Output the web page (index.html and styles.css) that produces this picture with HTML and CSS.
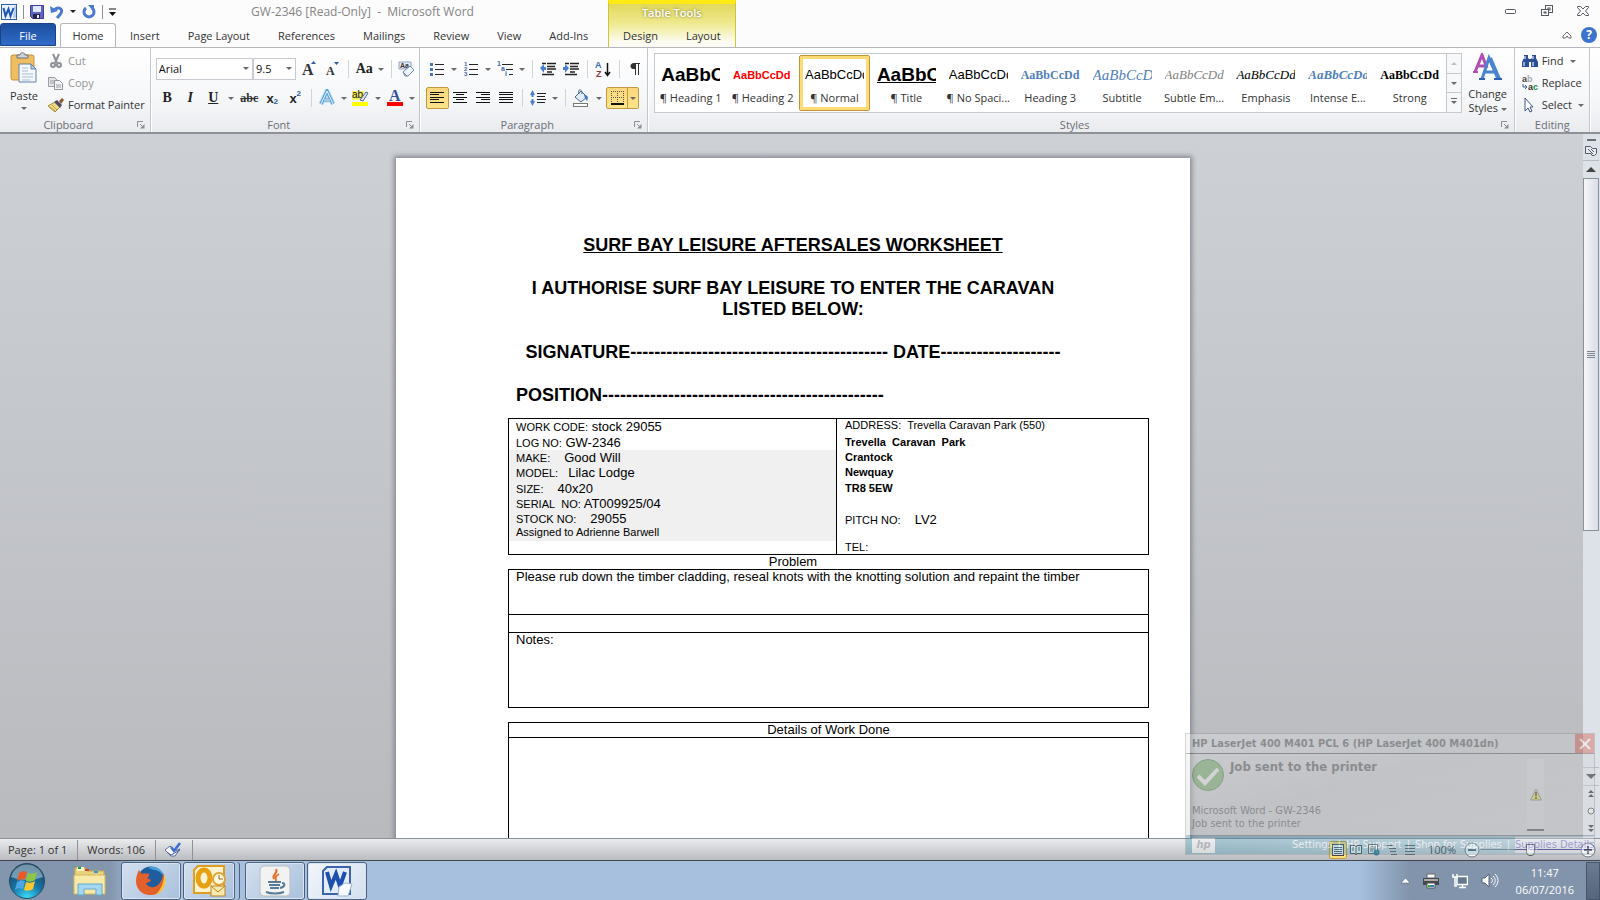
FILE: index.html
```html
<!DOCTYPE html>
<html lang="en">
<head>
<meta charset="utf-8">
<title>GW-2346 [Read-Only] - Microsoft Word</title>
<link rel="stylesheet" href="styles.css">
</head>
<body>
<div class="app">
  <header class="header">
    <div class="header-main">
      <div class="title-row">
        <div class="qat">
          <button class="icon-btn" aria-label="Word menu"><svg width="16" height="16" viewBox="0 0 16 16"><rect x=".5" y=".5" width="15" height="15" fill="#eaf2fc" stroke="#2a5caa"/><path d="M13 2h2v12h-3" fill="#b9cfee"/><path d="M2.500 4l2 8L7.500 5l2 7 3-8" fill="none" stroke="#1d57b8" stroke-width="2"/></svg></button>
          <span class="qat-sep"></span>
          <button class="icon-btn" aria-label="Save"><svg width="14" height="14" viewBox="0 0 14 14"><path d="M.5.500h13v13h-11l-2-2z" fill="#6166c4" stroke="#3f3f96"/><rect x="3" y="1" width="8" height="6" fill="#dfeafa"/><rect x="3" y="9" width="7" height="5" fill="#26264c"/><rect x="7" y="10" width="2" height="3" fill="#eee"/></svg></button>
          <button class="icon-btn" aria-label="Undo"><svg width="14" height="14" viewBox="0 0 14 14"><path d="M4 5c5-4 9-1 7 3-1 2-2 3-4 5" fill="none" stroke="#4a7bd0" stroke-width="3"/><path d="M0 1l1 7 7-2z" fill="#4a7bd0"/></svg></button>
          <span class="caret caret-dark"></span>
          <button class="icon-btn" aria-label="Repeat"><svg width="14" height="14" viewBox="0 0 14 14"><path d="M4 3a5 5 0 1 0 6 0" fill="none" stroke="#4a7bd0" stroke-width="3"/><path d="M6 0h6v7z" fill="#4a7bd0"/></svg></button>
          <span class="qat-sep"></span>
          <button class="icon-btn" aria-label="Customize"><svg width="7" height="8" viewBox="0 0 7 8"><path d="M0 1h7" stroke="#111"/><path d="M0 4h7L3.500 8z" fill="#111"/></svg></button>
        </div>
        <div class="title">GW-2346 [Read-Only]&nbsp; -&nbsp; Microsoft Word</div>
      </div>
      <nav class="tabs">
        <button class="tab tab-file">File</button>
        <button class="tab tab-active">Home</button>
        <button class="tab">Insert</button>
        <button class="tab">Page Layout</button>
        <button class="tab">References</button>
        <button class="tab">Mailings</button>
        <button class="tab">Review</button>
        <button class="tab">View</button>
        <button class="tab">Add-Ins</button>
      </nav>
    </div>
    <div class="context">
      <div class="context-title">Table Tools</div>
      <div class="context-tabs"><button class="tab">Design</button><button class="tab">Layout</button></div>
    </div>
    <div class="header-end">
      <div class="win-controls">
        <button class="icon-btn" aria-label="Minimize"><svg width="12" height="6" viewBox="0 0 12 6"><rect x=".5" y="1.500" width="10" height="4" rx="1" fill="#fff" stroke="#555763"/></svg></button>
        <button class="icon-btn" aria-label="Restore"><svg width="12" height="12" viewBox="0 0 12 12" fill="#fff" stroke="#555763"><rect x="4.500" y=".5" width="7" height="7"/><rect x="7" y="3" width="2" height="2"/><rect x=".5" y="4.500" width="7" height="6"/><rect x="3" y="7" width="2" height="1"/></svg></button>
        <button class="icon-btn" aria-label="Close"><svg width="12" height="10" viewBox="0 0 12 10"><path d="M.5.500h3L6 3 8.500.500h3v1L8.500 5l3 3.500v1h-3L6 7 3.500 9.500h-3v-1L3.500 5l-3-3.500z" fill="#fff" stroke="#555763"/></svg></button>
      </div>
      <div class="help-row">
        <button class="icon-btn" aria-label="Minimize the Ribbon"><svg width="10" height="8" viewBox="0 0 10 8"><path d="M1 5l4-4 4 4v2H6.500L5 5 3.500 7H1z" fill="#fff" stroke="#666"/></svg></button>
        <button class="icon-btn help" aria-label="Help">?</button>
      </div>
    </div>
  </header>

  <section class="ribbon">
    <div class="group">
      <div class="group-body clipboard">
        <button class="big-btn paste"><svg width="28" height="32" viewBox="0 0 28 32"><rect x="1" y="3" width="23" height="25" rx="2" fill="#efbd62" stroke="#c8913a"/><path d="M7 6V3h3c0-3 5-3 5 0h3v3z" fill="#cfd3da" stroke="#6a6f79"/><path d="M9 12h12l5 5v13H9z" fill="#f4f8fd" stroke="#6481a8"/><path d="M21 12v5h5z" fill="#b8cde6" stroke="#6481a8"/><path d="M12 16h6M12 19h6M12 22h11M12 25h11M12 28h8" stroke="#a8bdd8"/></svg><span>Paste</span><span class="caret"></span></button>
        <div class="stack">
          <button class="line-btn muted"><svg width="16" height="16" viewBox="0 0 16 16"><path d="M5 1l4 9M11 1L7 10" stroke="#8d9197" stroke-width="2"/><circle cx="5" cy="12" r="2" fill="none" stroke="#8d9197" stroke-width="2"/><circle cx="11" cy="12" r="2" fill="none" stroke="#8d9197" stroke-width="2"/></svg>Cut</button>
          <button class="line-btn muted"><svg width="16" height="16" viewBox="0 0 16 16"><path d="M.5 2.500h6l3 3v6h-9z" fill="#e4e5e7" stroke="#9a9da2"/><path d="M6.500 5.500h5l3 3v6h-8z" fill="#f3f3f4" stroke="#8f9297"/><path d="M8 10h5M8 12h5M2 6h4M2 8h4" stroke="#9a9da2"/></svg>Copy</button>
          <button class="line-btn"><svg width="16" height="16" viewBox="0 0 16 16"><path d="M0 9l7-4 5 5-5 5z" fill="#efdc86" stroke="#a88f38"/><path d="M2 10l5 4M4 8l5 5" stroke="#b89c3f"/><path d="M6 5l3-2 5 5-2 3z" fill="#4d4c68"/><path d="M11 4l3-3 2 2-3 4z" fill="#8b5d34"/></svg>Format Painter</button>
        </div>
      </div>
      <div class="group-foot"><span>Clipboard</span><svg class="launch" width="8" height="8" viewBox="0 0 8 8"><path d="M.5 6V.500H6M3 3l3 3" fill="none" stroke="#8b8e94"/><path d="M3 7.500h4.500V3z" fill="#8b8e94"/></svg></div>
    </div>

    <div class="group">
      <div class="group-body rows font-rows">
        <div class="row">
          <span class="combo combo-font"><select aria-label="Font"><option>Arial</option></select></span>
          <span class="combo combo-size"><select aria-label="Font size"><option>9.5</option></select></span>
          <button class="tool" aria-label="Grow font"><svg width="15" height="16" viewBox="0 0 15 16"><text x="0" y="14" class="serif-b" font-size="16">A</text><path d="M9 3l2.500-3L14 3z" fill="#2f5d9f"/></svg></button>
          <button class="tool" aria-label="Shrink font"><svg width="15" height="16" viewBox="0 0 15 16"><text x="1" y="14" class="serif-b" font-size="12">A</text><path d="M9 1l2.500 3L14 1z" fill="#2f5d9f"/></svg></button>
          <span class="sep"></span>
          <button class="tool tool-serif" aria-label="Change case">Aa</button><span class="caret"></span>
          <span class="sep"></span>
          <button class="tool" aria-label="Clear formatting"><svg width="18" height="18" viewBox="0 0 18 18"><path d="M1 2h12v7H1z" fill="#e5edf8" stroke="#8fa5c6"/><text x="2" y="8" font-size="7" font-weight="bold" font-family="Liberation Sans" fill="#333">Aa</text><path d="M5 12l7-6 4 4-6 6H7z" fill="#f0f4fb" stroke="#7087b0"/><path d="M5 12l4 4" stroke="#7087b0"/></svg></button>
        </div>
        <div class="row">
          <button class="tool tool-serif">B</button>
          <button class="tool tool-serif italic">I</button>
          <button class="tool tool-serif underline">U</button><span class="caret caret-wide"></span>
          <button class="tool tool-abc">abc</button>
          <button class="tool tool-x">x<sub>2</sub></button>
          <button class="tool tool-x">x<sup>2</sup></button>
          <span class="sep"></span>
          <button class="tool" aria-label="Text effects"><svg width="18" height="18" viewBox="0 0 18 18"><path d="M3 15L9 2l6 13M6 11h6" fill="none" stroke="#b4dcf7" stroke-width="5"/><path d="M3 15L9 2l6 13M6 11h6" fill="none" stroke="#5b9fd3" stroke-width="3"/><path d="M3 15L9 2l6 13M6 11h6" fill="none" stroke="#e9f6ff" stroke-width="1"/></svg></button><span class="caret"></span>
          <button class="tool" aria-label="Highlight"><svg width="18" height="18" viewBox="0 0 18 18"><rect y="2" width="12" height="9" fill="#f4f06a"/><text x="0" y="9" font-size="10" font-family="Liberation Sans" fill="#111">ab</text><path d="M8 11l6-8 2 1-5 8z" fill="#dfe7f4" stroke="#51698f"/><rect x="0" y="13" width="16" height="4" fill="#ff0"/></svg></button><span class="caret"></span>
          <button class="tool" aria-label="Font colour"><svg width="18" height="18" viewBox="0 0 18 18"><text x="3" y="12" font-size="16" font-weight="bold" font-family="Liberation Serif" fill="#33539c">A</text><rect x="1" y="13" width="16" height="4" fill="#f00"/></svg></button><span class="caret"></span>
        </div>
      </div>
      <div class="group-foot"><span>Font</span><svg class="launch" width="8" height="8" viewBox="0 0 8 8"><path d="M.5 6V.500H6M3 3l3 3" fill="none" stroke="#8b8e94"/><path d="M3 7.500h4.500V3z" fill="#8b8e94"/></svg></div>
    </div>

    <div class="group">
      <div class="group-body rows para-rows">
        <div class="row">
          <button class="tool" aria-label="Bullets"><svg width="14" height="14" viewBox="0 0 14 14"><path d="M5 2.500h9M5 7.500h9M5 12.500h9" stroke="#222"/><path d="M0 1h3v3H0zM0 6h3v3H0zM0 11h3v3H0z" fill="#4a74b8"/></svg></button><span class="caret"></span>
          <button class="tool" aria-label="Numbering"><svg width="14" height="16" viewBox="0 0 14 16"><path d="M5 3.500h9M5 8.500h9M5 13.500h9" stroke="#222"/><text font-size="6" font-weight="bold" font-family="Liberation Sans" fill="#3c66ad"><tspan x="0" y="5">1</tspan><tspan x="0" y="10">2</tspan><tspan x="0" y="15">3</tspan></text></svg></button><span class="caret"></span>
          <button class="tool" aria-label="Multilevel list"><svg width="16" height="16" viewBox="0 0 16 16"><path d="M5 3.500h11M9 8.500h7M12 13.500h4" stroke="#222"/><text font-size="7" font-weight="bold" font-family="Liberation Sans" fill="#3c66ad"><tspan x="0" y="5">1</tspan><tspan x="4" y="10">a</tspan><tspan x="8" y="15">i</tspan></text></svg></button><span class="caret"></span>
          <span class="sep"></span>
          <button class="tool" aria-label="Decrease indent"><svg width="16" height="14" viewBox="0 0 16 14"><path d="M2 1.500h4M7 1.500h9M7 4.500h8M7 7h9M7 10h5M2 12.500h12" stroke="#222" stroke-width="1.500"/><path d="M0 6l4-4v3h2v3H4v3z" fill="#4a7fd0"/></svg></button>
          <button class="tool" aria-label="Increase indent"><svg width="16" height="14" viewBox="0 0 16 14"><path d="M2 1.500h4M7 1.500h9M7 4.500h8M7 7h9M7 10h5M2 12.500h12" stroke="#222" stroke-width="1.500"/><path d="M6 6L2 2v3H0v3h2v3z" fill="#4a7fd0"/></svg></button>
          <span class="sep"></span>
          <button class="tool" aria-label="Sort"><svg width="16" height="17" viewBox="0 0 16 17"><text x="0" y="7" font-size="9" font-weight="bold" font-family="Liberation Sans" fill="#3c66ad">A</text><text x="1" y="16" font-size="9" font-weight="bold" font-family="Liberation Sans" fill="#8c3a40">Z</text><path d="M12.500 2v12M10 11l2.500 3.500L15 11" fill="none" stroke="#111" stroke-width="1.500"/></svg></button>
          <span class="sep"></span>
          <button class="tool" aria-label="Show marks"><svg width="12" height="14" viewBox="0 0 12 14"><path d="M6 1.500h5M6.500 1v12M9.500 1v12" stroke="#333" fill="none"/><path d="M6 1C0 0 0 8 6 7z" fill="#333"/></svg></button>
        </div>
        <div class="row">
          <button class="tool tool-on" aria-label="Align left"><svg width="14" height="12" viewBox="0 0 14 12"><path d="M0 .500h14M0 2.500h9M0 5.500h14M0 7.500h9M0 10.500h14" stroke="#111"/></svg></button>
          <button class="tool" aria-label="Center"><svg width="14" height="12" viewBox="0 0 14 12"><path d="M0 .500h14M3 2.500h8M0 5.500h14M3 7.500h8M0 10.500h14" stroke="#111"/></svg></button>
          <button class="tool" aria-label="Align right"><svg width="14" height="12" viewBox="0 0 14 12"><path d="M0 .500h14M5 2.500h9M0 5.500h14M5 7.500h9M0 10.500h14" stroke="#111"/></svg></button>
          <button class="tool" aria-label="Justify"><svg width="14" height="12" viewBox="0 0 14 12"><path d="M0 .500h14M0 2.500h14M0 5.500h14M0 7.500h14M0 10.500h14" stroke="#111"/></svg></button>
          <span class="sep"></span>
          <button class="tool" aria-label="Line spacing"><svg width="16" height="16" viewBox="0 0 16 16"><path d="M7 3.500h9M7 6.500h8M7 9.500h9M7 12.500h8" stroke="#222"/><path d="M0 5l2.500-5L5 5H3.500v2h-2V5zM0 11l2.500 5L5 11H3.500V9h-2v2z" fill="#4a7fd0"/></svg></button><span class="caret"></span>
          <span class="sep"></span>
          <button class="tool" aria-label="Shading"><svg width="18" height="18" viewBox="0 0 18 18"><path d="M3 8l6-6 6 6-6 5z" fill="#e3edfa" stroke="#4b658c"/><path d="M7 5c-2-6 4-5 3 0" fill="none" stroke="#4b658c"/><path d="M12 6c5 0 4 4 3 6l-2-3z" fill="#3f78c6"/><rect x="1.500" y="14.500" width="14" height="3" fill="#fff" stroke="#777"/></svg></button><span class="caret caret-wide"></span>
          <button class="tool-split" aria-label="Borders"><svg width="13" height="14" viewBox="0 0 13 14"><path d="M.5 0v12M6.500 0v12M12.500 0v12M0 .500h13M0 6.500h13" stroke="#555" stroke-dasharray="1 1"/><path d="M0 13h13" stroke="#111" stroke-width="2"/></svg><span class="split-arrow"><span class="caret"></span></span></button>
        </div>
      </div>
      <div class="group-foot"><span>Paragraph</span><svg class="launch" width="8" height="8" viewBox="0 0 8 8"><path d="M.5 6V.500H6M3 3l3 3" fill="none" stroke="#8b8e94"/><path d="M3 7.500h4.500V3z" fill="#8b8e94"/></svg></div>
    </div>

    <div class="group group-grow">
      <div class="group-body styles-body">
        <div class="gallery">
          <button class="style"><span class="sample s-h1">AaBbCc</span><span class="style-name">¶ Heading 1</span></button>
          <button class="style"><span class="sample s-h2">AaBbCcDd</span><span class="style-name">¶ Heading 2</span></button>
          <button class="style style-on"><span class="sample s-normal">AaBbCcDd</span><span class="style-name">¶ Normal</span></button>
          <button class="style"><span class="sample s-title">AaBbCc</span><span class="style-name">¶ Title</span></button>
          <button class="style"><span class="sample s-normal">AaBbCcDd</span><span class="style-name">¶ No Spaci...</span></button>
          <button class="style"><span class="sample s-h3">AaBbCcDd</span><span class="style-name">Heading 3</span></button>
          <button class="style"><span class="sample s-sub">AaBbCcD</span><span class="style-name">Subtitle</span></button>
          <button class="style"><span class="sample s-subtle">AaBbCcDd</span><span class="style-name">Subtle Em...</span></button>
          <button class="style"><span class="sample s-emph">AaBbCcDd</span><span class="style-name">Emphasis</span></button>
          <button class="style"><span class="sample s-intense">AaBbCcDd</span><span class="style-name">Intense E...</span></button>
          <button class="style"><span class="sample s-strong">AaBbCcDd</span><span class="style-name">Strong</span></button>
          <div class="gallery-nav">
            <button aria-label="Up"><span class="caret caret-up"></span></button>
            <button aria-label="Down"><span class="caret"></span></button>
            <button class="more" aria-label="More"><span class="caret"></span></button>
          </div>
        </div>
        <button class="big-btn change"><svg width="30" height="28" viewBox="0 0 30 28"><path d="M2 19L9 2l5 13M4 13h8" fill="none" stroke="#b04fae" stroke-width="3"/><path d="M0 19h5M11 19h4" stroke="#b04fae" stroke-width="2"/><path d="M9 26L16 5l9 21M12 19h10" fill="none" stroke="#4a83d2" stroke-width="3"/><path d="M17 5l9 21" stroke="#4a83d2" stroke-width="4"/><path d="M6 26h6M21 26h8" stroke="#2f62ac" stroke-width="2"/></svg><span>Change</span><span>Styles <span class="caret caret-inline"></span></span></button>
      </div>
      <div class="group-foot"><span>Styles</span><svg class="launch" width="8" height="8" viewBox="0 0 8 8"><path d="M.5 6V.500H6M3 3l3 3" fill="none" stroke="#8b8e94"/><path d="M3 7.500h4.500V3z" fill="#8b8e94"/></svg></div>
    </div>

    <div class="group">
      <div class="group-body editing">
        <div class="stack">
          <button class="line-btn"><svg width="16" height="14" viewBox="0 0 16 14"><path d="M2 1h4v3l1 1h2l1-1V1h4v3l2 4v5H9V8H7v5H0V8l2-4z" fill="#2b4f93"/><path d="M3 2v3M11 2v3M2 8v4M11 8v4" stroke="#b9cdf0" stroke-width="1.500"/></svg>Find<span class="caret"></span></button>
          <button class="line-btn"><svg width="16" height="16" viewBox="0 0 16 16"><g font-family="Liberation Sans" font-weight="bold" font-size="9"><text x="0" y="7" fill="#444">a</text><text x="5" y="7" fill="#aaa">b</text><text x="6" y="15" fill="#333">a</text><text x="11" y="15" fill="#1e8f1e">c</text></g><path d="M1 9v3h4M3 10l2 2-2 2" fill="none" stroke="#3b5fa5"/></svg>Replace</button>
          <button class="line-btn"><svg width="16" height="16" viewBox="0 0 16 16"><path d="M3 1l8 9H8l2 4-2 1-2-4-3 3z" fill="#fff" stroke="#40598a"/></svg>Select<span class="caret"></span></button>
        </div>
      </div>
      <div class="group-foot foot-plain"><span>Editing</span></div>
    </div>
    <div class="ribbon-end"></div>
  </section>

  <main class="workspace">
    <div class="canvas">
      <article class="page">
        <h1 class="doc-h">SURF BAY LEISURE AFTERSALES WORKSHEET</h1>
        <p class="doc-p">I AUTHORISE SURF BAY LEISURE TO ENTER THE CARAVAN<br>LISTED BELOW:</p>
        <p class="doc-p">SIGNATURE------------------------------------------- DATE--------------------</p>
        <p class="doc-p doc-left">POSITION-----------------------------------------------</p>
        <table class="sheet info">
          <tr>
            <td class="info-left">
              <div class="ln"><small>WORK CODE:</small> stock 29055</div>
              <div class="ln ln-tall"><small>LOG NO:</small> GW-2346</div>
              <div class="shade">
                <div class="ln"><small>MAKE:</small><i class="gap-l"></i>Good Will</div>
                <div class="ln"><small>MODEL:</small><i class="gap-s"></i>Lilac Lodge</div>
                <div class="ln ln-tall"><small>SIZE:</small><i class="gap-l"></i>40x20</div>
                <div class="ln"><small>SERIAL&nbsp; NO:</small> AT009925/04</div>
                <div class="ln"><small>STOCK NO:</small><i class="gap-m"></i>29055</div>
                <div class="ln ln-small">Assigned to Adrienne Barwell</div>
              </div>
            </td>
            <td class="info-right">
              <div class="ln ln-small">ADDRESS:&nbsp; Trevella Caravan Park (550)</div>
              <div class="ln ln-tall ln-bold">Trevella&nbsp; Caravan&nbsp; Park</div>
              <div class="ln ln-bold">Crantock</div>
              <div class="ln ln-bold">Newquay</div>
              <div class="ln ln-tall ln-bold">TR8 5EW</div>
              <div class="ln ln-pitch"><small>PITCH NO:</small><i class="gap-m"></i>LV2</div>
              <div class="ln ln-tel"><small>TEL:</small></div>
            </td>
          </tr>
        </table>
        <p class="caption">Problem</p>
        <table class="sheet problem">
          <tr class="r-problem"><td>Please rub down the timber cladding, reseal knots with the knotting solution and repaint the timber</td></tr>
          <tr class="r-blank"><td></td></tr>
          <tr class="r-notes"><td>Notes:</td></tr>
        </table>
        <table class="sheet work">
          <tr><th>Details of Work Done</th></tr>
          <tr class="r-work"><td></td></tr>
        </table>
      </article>
    </div>
    <aside class="scroll">
      <span class="split-handle"></span>
      <svg class="browse" width="12" height="12" viewBox="0 0 12 12"><path d="M.5 1.500h5l2 2h4v5l-2 2H7l-1-2H.500z" fill="#e8ebf1" stroke="#555a66"/><path d="M3 4l5 5M6 4l3 3" stroke="#555a66"/></svg>
      <button class="sc-btn" aria-label="Scroll up"><span class="sc-up"></span></button>
      <div class="track"><div class="thumb"><span></span></div></div>
      <button class="sc-btn" aria-label="Scroll down"><span class="sc-down"></span></button>
      <div class="browse-btns">
        <button aria-label="Previous page"><svg width="6" height="8" viewBox="0 0 6 8"><path d="M0 3l3-3 3 3zM0 7l3-3 3 3z" fill="#333"/></svg></button>
        <button aria-label="Browse object"><svg width="8" height="8" viewBox="0 0 8 8"><circle cx="4" cy="4" r="3" fill="#eee" stroke="#555"/></svg></button>
        <button aria-label="Next page"><svg width="6" height="8" viewBox="0 0 6 8"><path d="M0 1h6L3 4zM0 5h6L3 8z" fill="#333"/></svg></button>
      </div>
    </aside>
  </main>

  <footer class="status">
    <span class="st-item">Page: 1 of 1</span>
    <span class="st-item st-words">Words: 106</span>
    <span class="st-item st-proof"><svg width="17" height="15" viewBox="0 0 17 15"><path d="M0 8l5-4 5 5 5-2-5 7-4 0z" fill="#fff" stroke="#52699d"/><path d="M2 10l4 3 9-5" fill="none" stroke="#4460a4"/><path d="M6 5l3 4 6-8" fill="none" stroke="#3a6fd0" stroke-width="2.500"/></svg></span>
    <span class="st-space"></span>
    <div class="views">
      <button class="view view-on" aria-label="Print layout"><svg width="12" height="12" viewBox="0 0 12 12"><rect x=".5" y=".5" width="11" height="11" fill="#fff" stroke="#444"/><path d="M2 3.500h8M2 5.500h8M2 7.500h8M2 9.500h8" stroke="#555"/></svg></button>
      <button class="view" aria-label="Full screen reading"><svg width="12" height="12" viewBox="0 0 12 12"><path d="M.5 1.500H5L6 3l1-1.500h4.500v8H7L6 11 5 9.500H.500z" fill="#fff" stroke="#444"/><path d="M2 4h2M2 6h2M8 4h2M8 6h2M6 3v8" stroke="#555"/></svg></button>
      <button class="view" aria-label="Web layout"><svg width="12" height="12" viewBox="0 0 12 12"><path d="M.5.500h9v9h-9zM2 3h6M2 5h6M2 7h3" fill="#fff" stroke="#555"/><circle cx="8.500" cy="8.500" r="3" fill="#2f6f9e"/><path d="M7 8l2-2 1 3z" fill="#4dae53"/></svg></button>
      <button class="view" aria-label="Outline"><svg width="12" height="10" viewBox="0 0 12 10"><path d="M0 .500h7M3 3.500h7M4 6.500h6M5 9.500h6" stroke="#555"/></svg></button>
      <button class="view" aria-label="Draft"><svg width="10" height="10" viewBox="0 0 10 10"><path d="M0 .500h10M0 3.500h10M0 6.500h10M0 9.500h10" stroke="#555"/></svg></button>
    </div>
    <button class="zoom-label">100%</button>
    <button class="zoom-btn" aria-label="Zoom out"><svg width="16" height="16" viewBox="0 0 16 16"><circle cx="8" cy="8" r="7" fill="#f6f8fa" stroke="#70757e"/><path d="M4 8h8" stroke="#555" stroke-width="2"/></svg></button>
    <input class="zoom-range" type="range" min="0" max="100" value="50" aria-label="Zoom">
    <button class="zoom-btn" aria-label="Zoom in"><svg width="16" height="16" viewBox="0 0 16 16"><circle cx="8" cy="8" r="7" fill="#f6f8fa" stroke="#70757e"/><path d="M4 8h8M8 4v8" stroke="#555" stroke-width="2"/></svg></button>
  </footer>

  <footer class="taskbar">
    <button class="start" aria-label="Start"><svg width="38" height="38" viewBox="0 0 38 38"><defs><radialGradient id="orb" cx=".5" cy="1" r=".9"><stop offset="0" stop-color="#3fe0ff"/><stop offset=".5" stop-color="#1577a8"/><stop offset="1" stop-color="#1c4766"/></radialGradient></defs><circle cx="19" cy="19" r="17.500" fill="url(#orb)" stroke="#2c4a63"/><path d="M3 15a16.500 16.500 0 0 1 32 0c-10 4-22 4-32 0z" fill="#bcd3e2" opacity=".55"/><path d="M11 11c3-2 5-2 8-1l-2 8c-3-1-5-1-8 1z" fill="#ea5a26"/><path d="M20 11c3 1 6 1 9-1l-2 8c-3 2-6 2-9 1z" fill="#8dc63f"/><path d="M9 20c3-2 5-2 8-1l-2 8c-3-1-5-1-8 1z" fill="#4ea6e6"/><path d="M18 20c3 1 6 1 9-1l-2 8c-3 2-6 2-9 1z" fill="#fcc62d"/></svg></button>
    <button class="explorer" aria-label="Windows Explorer"><svg width="34" height="30" viewBox="0 0 34 30"><path d="M2 2h10l2 3h17v22H2z" fill="#e9d27c" stroke="#c5a94d"/><path d="M4 1h7v4H4z" fill="#fff5c8"/><rect x="5" y="1" width="3" height="2" fill="#18a23c"/><rect x="12" y="3" width="4" height="2" fill="#d6452c"/><rect x="21" y="5" width="4" height="2" fill="#3694dd"/><path d="M1 9h31v19H1z" fill="#f7e9a8" stroke="#d2b860"/><path d="M5 29V18h24v11h-6v-6H11v6z" fill="#a5d8f0" stroke="#5fa9cd"/></svg></button>
    <button class="task" aria-label="Firefox"><svg width="32" height="32" viewBox="0 0 32 32"><circle cx="16" cy="15" r="13.500" fill="#205d9e"/><path d="M13 3c7-3 15 1 16 9-3-5-6-7-10-7z" fill="#43a3dd"/><path d="M28 8c6 12-3 23-13 22-8 0-14-6-14-14C1 11 3 7 4 5l3 4c2-1 4-1 5 0l2-1c0 3 0 4-2 5l4 2c-1 2-3 3-5 3 1 4 8 6 12 2 4-4 5-8 5-12z" fill="#e4602a"/><path d="M29 9c4 9-1 19-9 21 6-5 9-12 9-21z" fill="#fbc52f"/></svg></button>
    <button class="task task-outlook" aria-label="Outlook"><svg width="34" height="34" viewBox="0 0 34 34"><path d="M6 2h26v27H2V6z" fill="#fdf3cf" stroke="#e09e1e" stroke-width="2"/><ellipse cx="12" cy="14" rx="6" ry="8" fill="none" stroke="#e8a013" stroke-width="5"/><circle cx="27" cy="15" r="6" fill="#fff8dc" stroke="#dfa53a" stroke-width="2"/><path d="M27 11v4h4" fill="none" stroke="#9b6b18"/><rect x="19" y="22" width="14" height="10" fill="#fbe8ad" stroke="#b98524"/><path d="M19 22l7 6 7-6" fill="none" stroke="#b98524"/></svg></button>
    <button class="task" aria-label="Java"><svg width="32" height="32" viewBox="0 0 32 32"><rect x="1" y="1" width="30" height="30" rx="4" fill="#f2f2f2" stroke="#b9bec5"/><path d="M17 4c3 4-5 6-2 10M20 9c-5 3-3 4-3 7" fill="none" stroke="#e8722b" stroke-width="2"/><path d="M9 17h13M10 20h11M11 23h9M7 27c5 2 13 2 18 0M23 18c4 0 3 4-2 5" fill="none" stroke="#587b99" stroke-width="2"/></svg></button>
    <button class="task task-active" aria-label="Word"><svg width="32" height="32" viewBox="0 0 32 32"><path d="M6 2h23v27H2V6z" fill="#e3edf9" stroke="#3a62ad" stroke-width="2"/><path d="M6 7l4 14 5-12 4 12 5-14" fill="none" stroke="#1c4fae" stroke-width="4"/><path d="M18 22l6-4 7 1-4 12h-10z" fill="#f8fafd" stroke="#9fb5d8"/></svg></button>
    <span class="task-space"></span>
    <div class="tray">
      <button aria-label="Show hidden icons"><svg width="9" height="6" viewBox="0 0 9 6"><path d="M0 5l4.500-5L9 5z" fill="#fff" stroke="#4d5b6d" stroke-width=".5"/></svg></button>
      <svg width="16" height="16" viewBox="0 0 16 16"><path d="M4 1h8v4H4z" fill="#fff" stroke="#666"/><path d="M0 5h16v7H0z" fill="#45474b"/><path d="M1 6h14v2H1z" fill="#aaa"/><path d="M4 10h8v5H4z" fill="#fff" stroke="#555"/><rect x="5" y="12" width="3" height="2" fill="#3aa63c"/><rect x="8" y="12" width="3" height="2" fill="#2b78d0"/></svg>
      <svg width="16" height="16" viewBox="0 0 16 16"><path d="M5 3.500h10.500v8H5z" fill="#66788e" stroke="#fff" stroke-width="1.500"/><path d="M7 14.500h7M10.500 12v2M3 5v8h2M1 1v3h4V1M3 4v2" fill="none" stroke="#fff" stroke-width="1.500"/></svg>
      <svg width="18" height="16" viewBox="0 0 18 16"><path d="M1 5h3l4-4v13l-4-4H1z" fill="#fff" stroke="#546273"/><path d="M10 5c2 2 2 3 0 5M12 3c3 3 3 6 0 9M14 1c4 4 4 9 0 13" fill="none" stroke="#fff"/></svg>
    </div>
    <time class="clock"><span>11:47</span><span>06/07/2016</span></time>
    <button class="desk" aria-label="Show desktop"></button>
  </footer>

  <div class="toast">
    <div class="toast-head"><strong>HP LaserJet 400 M401 PCL 6 (HP LaserJet 400 M401dn)</strong><button class="toast-x" aria-label="Close notification"><svg width="12" height="12" viewBox="0 0 12 12"><path d="M1 1l10 10M11 1L1 11" stroke="#fff" stroke-width="2"/></svg></button></div>
    <div class="toast-body">
      <svg class="toast-ok" width="32" height="32" viewBox="0 0 32 32"><circle cx="16" cy="16" r="15.500" fill="#5fa84a" stroke="#2c6a25"/><path d="M6 17l7 7L26 10" fill="none" stroke="#fff" stroke-width="4"/></svg>
      <strong class="toast-title">Job sent to the printer</strong>
      <div class="toast-level"><svg width="12" height="13" viewBox="0 0 12 13"><path d="M6 1l5.500 11H.500z" fill="#e6e400" stroke="#666"/><path d="M6 4v4M6 9v2" stroke="#222" stroke-width="2"/></svg></div>
    </div>
    <div class="toast-text">Microsoft Word - GW-2346<br>Job sent to the printer</div>
    <div class="toast-foot"><span class="hp">hp</span><a href="#">Settings</a><i>|</i><a href="#">HP Support</a><i>|</i><a href="#">Shop for Supplies</a><i>|</i><a href="#" class="toast-link">Supplies Details</a></div>
  </div>
</div>
</body>
</html>
```
FILE: styles.css
```css
* { box-sizing: border-box; }
html, body { margin: 0; height: 100%; }
body { font: 11px/16px "Open Sans", "Noto Sans", sans-serif; color: #333; overflow: hidden; }
button { font: inherit; color: inherit; background: none; border: 0; padding: 0; margin: 0; white-space: nowrap; }
svg { display: block; flex: none; }
p, h1 { margin: 0; }
.app { position: relative; display: flex; flex-direction: column; height: 100vh; min-height: 600px; }

.header { display: flex; height: 48px; flex: none; background: #fcfcfc; border-bottom: 1px solid #b5b7bb; }
.header-main { flex: 0 0 608px; display: flex; flex-direction: column; }
.title-row { display: flex; height: 24px; align-items: center; }
.qat { display: flex; align-items: center; gap: 6px; padding-left: 1px; width: 117px; }
.qat-sep { width: 1px; height: 14px; background: #8d9095; }
.icon-btn { display: flex; align-items: center; justify-content: center; }
.title { flex: 1; text-align: center; color: #848484; font-size: 12px; }
.tabs { display: flex; height: 24px; }
.tab { padding: 0 14px; height: 24px; line-height: 26px; }
.tab-file { width: 56px; height: 23px; margin-right: 4px; color: #fff; background: linear-gradient(#1d4f9f, #2f6bc8); border: 1px solid #1b4486; border-radius: 3px 3px 0 0; }
.tab-active { width: 56px; padding: 0; background: #fff; border: 1px solid #b5b7bb; border-bottom: 0; border-radius: 3px 3px 0 0; }
.tab-file, .tab-active { line-height: 23px; }
.context { flex: 0 0 124px; display: flex; flex-direction: column; border-top: 4px solid #ffea14; border-left: 1px solid #cdc535; border-right: 1px solid #cdc535; background: linear-gradient(#e2d95b, #efe98f 45%, #fcfcf4 90%); }
.context-title { height: 20px; line-height: 18px; text-align: center; color: #fff; font-weight: 600; text-shadow: 0 0 3px #6f6b2c; }
.context-tabs { display: flex; justify-content: center; }
.header-end { flex: 1; }
.win-controls { display: flex; height: 22px; align-items: center; justify-content: flex-end; gap: 24px; padding-right: 11px; }
.help-row { display: flex; justify-content: flex-end; align-items: center; height: 26px; gap: 9px; padding-right: 3px; }
.help { width: 16px; height: 16px; border-radius: 50%; background: #3c74cd; color: #fff; font-weight: bold; font-size: 12px; }

.ribbon { display: flex; flex: none; height: 86px; background: linear-gradient(#fff, #f6f7f9 60%, #e9ebee); border-bottom: 2px solid #8e9298; }
.group { display: flex; flex-direction: column; flex: none; border-right: 1px solid #c3c6cb; box-shadow: 1px 0 #fff; margin-right: 1px; }
.group-grow { flex: 1; min-width: 0; }
.group-body { display: flex; height: 69px; }
.group-foot { display: flex; align-items: center; height: 15px; color: #6b6f78; padding: 0 5px 0 0; }
.group-foot span { flex: 1; text-align: center; }
.group-foot.foot-plain { padding: 0; }
.caret { display: inline-block; flex: none; border: 3px solid transparent; border-top-color: #6a6a6a; border-bottom: 0; margin: 0 3px 0 2px; }
.caret-dark { border-top-color: #222; margin: 0; }
.caret-wide { margin: 0 4px 0 3px; }
.caret-up { transform: rotate(180deg); opacity: .4; }
.caret-inline { vertical-align: middle; margin: 0; }
.big-btn { display: flex; flex-direction: column; align-items: center; line-height: 13px; }
.clipboard { padding: 4px 5px 0 4px; gap: 4px; }
.paste { width: 40px; gap: 5px; }
.stack { display: flex; flex-direction: column; }
.clipboard .stack { margin-top: -2px; }
.line-btn { display: flex; align-items: center; gap: 4px; height: 22px; }
.muted { color: #949494; }
.rows { flex-direction: column; gap: 7px; padding: 10px 0 0 4px; }
.row { display: flex; align-items: center; height: 22px; }
.font-rows { width: 267px; }
.para-rows { width: 226px; padding-left: 5px; }
.tool { display: flex; align-items: center; justify-content: center; width: 23px; height: 22px; flex: none; }
.sep { width: 1px; height: 18px; background: #d0d3d8; margin: 0 4px; flex: none; }
.combo { position: relative; height: 22px; }
.combo select { appearance: none; font: inherit; color: #111; background: #fff; border: 1px solid #c8cbd1; border-radius: 0; height: 22px; width: 100%; padding: 0 2px; display: block; }
.combo::after { content: ""; position: absolute; right: 4px; top: 9px; border: 3px solid transparent; border-top-color: #666; border-bottom: 0; }
.combo-font { width: 98px; }
.combo-size { width: 43px; margin-right: 2px; }
.serif-b { font-family: "Liberation Serif", serif; font-weight: bold; fill: #333; }
.tool-serif { font: bold 14px "Liberation Serif", serif; color: #222; }
.italic { font-style: italic; }
.underline { text-decoration: underline; }
.tool-abc { font: bold 12px "Liberation Serif", serif; text-decoration: line-through; }
.tool-x { font: bold 13px "Liberation Sans", sans-serif; color: #222; }
.tool-x sub, .tool-x sup { font-size: 8px; color: #2f5d9f; line-height: 8px; }
.tool-x sub { align-self: flex-end; margin-bottom: 3px; }
.tool-x sup { align-self: flex-start; margin-top: 3px; }
.tool-on, .tool-split { background: linear-gradient(#fbd77c, #fce48a); border: 1px solid #c29a3d; border-radius: 2px; }
.tool-split { display: flex; align-items: center; width: 33px; height: 22px; padding-left: 4px; }
.split-arrow { border-left: 1px solid #c29a3d; height: 20px; display: flex; align-items: center; margin-left: 3px; }

.styles-body { padding: 5px 2px 0 5px; gap: 2px; }
.gallery { display: flex; flex: 1; min-width: 0; height: 60px; background: #fff; border: 1px solid #c6c9cd; }
.style { display: flex; flex-direction: column; align-items: center; flex: 1; min-width: 0; margin: 1px 0; padding: 6px 0 0; border: 1px solid transparent; }
.style-on { border: 1px solid #bf953a; border-radius: 2px; box-shadow: inset 0 0 0 3px #fddc75; }
.sample { width: 59px; height: 26px; line-height: 26px; overflow: hidden; text-align: left; color: #000; }
.style-name { line-height: 20px; }
.s-h1, .s-title { font: bold 19px/26px "Liberation Sans", sans-serif; }
.s-title { text-decoration: underline; }
.s-h2 { font: bold 11px/26px "Liberation Sans", sans-serif; color: #f00; }
.s-normal { font: 13px/26px "Liberation Sans", sans-serif; }
.s-h3, .s-sub, .s-subtle, .s-emph, .s-intense, .s-strong { font: 13px/26px "Liberation Serif", serif; }
.s-h3 { font-weight: bold; color: #4f81bd; font-size: 12px; }
.s-sub { font-style: italic; color: #4f81bd; font-size: 15px; }
.s-subtle { font-style: italic; color: #808080; }
.s-emph { font-style: italic; }
.s-intense { font-style: italic; font-weight: bold; color: #4f81bd; }
.s-strong { font-weight: bold; font-size: 12px; }
.gallery-nav { display: flex; flex-direction: column; width: 15px; border-left: 1px solid #c6c9cd; background: #f7f8f9; }
.gallery-nav button { flex: 1; display: flex; align-items: center; justify-content: center; border-bottom: 1px solid #c6c9cd; }
.gallery-nav .caret { margin: 0; }
.gallery-nav .more { border-bottom: 0; }
.more .caret { position: relative; }
.more .caret::before { content: ""; position: absolute; left: -3px; top: -6px; width: 6px; height: 1px; background: #6a6a6a; }
.change { width: 48px; line-height: 14px; }
.change svg { margin-bottom: 6px; }
.editing { padding: 2px 2px 0 6px; }
.ribbon-end { width: 9px; }

.workspace { position: relative; flex: 1; min-height: 0; display: flex; background: linear-gradient(#cdd0d5, #b8babe); }
.canvas { flex: 1; overflow: hidden; display: flex; justify-content: center; padding: 24px 0 0 3px; }
.page { width: 794px; flex: none; background: #fff; padding: 77px 41px 0 112px; box-shadow: 0 0 5px 2px #85888e; color: #000; font: 13px/15px "Liberation Sans", Arial, sans-serif; height: 1123px; }
.doc-h, .doc-p { font: bold 18px/21px "Liberation Sans", Arial, sans-serif; text-align: center; margin: 0 71px 22px 0; }
.doc-h { text-decoration: underline; }
.doc-left { text-align: left; padding-left: 8px; margin-bottom: 12px; }
.sheet { width: 100%; border-collapse: collapse; table-layout: fixed; }
.sheet td, .sheet th { border: 1px solid #000; vertical-align: top; padding: 0 7px; text-align: left; font-weight: normal; }
.sheet th { text-align: center; height: 15px; line-height: 14px; }
small { font-size: 11px; }
.sheet.info td { height: 136px; padding: 0; }
.info-left { width: 328px; }
.ln { height: 15px; line-height: 15px; padding-left: 7px; white-space: nowrap; }
.info-right .ln { padding-left: 8px; }
.ln-tall { height: 16px; line-height: 17px; }
.ln-bold { font-weight: bold; font-size: 11px; }
.ln-small { font-size: 11px; line-height: 13px; }
.ln-pitch { margin-top: 16px; }
.ln-tel { margin-top: 12px; }
.shade { background: #f0f0f0; }
.gap-s, .gap-m, .gap-l { display: inline-block; width: 14px; }
.gap-s { width: 10px; }
.caption { text-align: center; line-height: 14px; height: 14px; margin-right: 71px; }
.problem td { line-height: 13px; }
.problem .r-problem td { height: 45px; }
.problem .r-blank td { height: 18px; }
.problem .r-notes td { height: 75px; }
.work { margin-top: 14px; }
.r-work td { height: 300px; }

.scroll { width: 17px; flex: none; display: flex; flex-direction: column; align-items: center; padding-right: 1px; background: #dde1e8; }
.split-handle { width: 9px; height: 2px; background: #6b6f78; margin: 5px 0 4px; }
.browse { margin-bottom: 3px; }
.sc-btn { height: 18px; width: 100%; display: flex; align-items: center; justify-content: center; border-top: 1px solid #b6bbc6; }
.sc-up { border: 5px solid transparent; border-bottom-color: #444; border-top: 0; }
.sc-down { border: 5px solid transparent; border-top-color: #444; border-bottom: 0; }
.track { flex: 1; width: 16px; }
.thumb { height: 60%; border: 1px solid #8a919f; background: linear-gradient(90deg, #f5f6f9, #d9dde6); display: flex; align-items: center; justify-content: center; }
.thumb span { width: 8px; height: 7px; background: repeating-linear-gradient(#7d8493 0 1px, transparent 1px 2px); }
.browse-btns { display: flex; flex-direction: column; gap: 9px; padding: 4px 0 6px; align-items: center; border-top: 1px solid #b6bbc6; width: 100%; }

.status { display: flex; align-items: center; height: 23px; flex: none; padding-right: 4px; background: linear-gradient(#eaebed, #b9bcc1); border-top: 1px solid #8c9099; border-bottom: 1px solid #41464f; }
.st-item { height: 20px; line-height: 20px; padding: 0 10px 0 8px; border-right: 1px solid #8e9299; display: flex; align-items: center; }
.st-words, .st-proof { padding-left: 9px; }
.st-space { flex: 1; }
.views { display: flex; }
.view { width: 18px; height: 18px; display: flex; align-items: center; justify-content: center; }
.view-on { background: #fde07c; border: 1px solid #c29a3d; border-radius: 2px; }
.zoom-label { margin: 0 8px 0 9px; }
.zoom-range { appearance: none; width: 100px; height: 16px; margin: 0; background: none; }
.zoom-range::-webkit-slider-runnable-track { height: 12px; background: linear-gradient(#7b8089, #7b8089) center / 100% 1px no-repeat; }
.zoom-range::-webkit-slider-thumb { appearance: none; width: 9px; height: 12px; background: #f4f4f4; border: 1px solid #555; border-radius: 1px 1px 5px 5px; }
.zoom-range::-moz-range-thumb { width: 9px; height: 12px; background: #f4f4f4; border: 1px solid #555; border-radius: 1px 1px 5px 5px; }

.taskbar { display: flex; align-items: center; height: 39px; flex: none; color: #fff; background: linear-gradient(90deg, #8496ad 0, #8496ad 110px, #a6c0de 140px, #a6c0de calc(100% - 240px), #8294ab calc(100% - 190px)); }
.start { margin-left: 8px; }
.explorer { margin: 0 14px 0 27px; }
.task { width: 60px; height: 38px; display: flex; align-items: center; justify-content: center; margin-right: 2px; border: 1px solid #4c6180; border-radius: 3px; background: linear-gradient(135deg, #d3e0ef, #a9c0dc); box-shadow: inset 0 0 0 1px #d9e5f2; }
.task-outlook { width: 52px; margin-right: 10px; box-shadow: inset 0 0 0 1px #d9e5f2, 4px 0 #a6c0de, 5px 0 #4c6180, 8px 0 #a6c0de; }
.task-active { background: linear-gradient(135deg, #f2f6fb, #d3e0ef); }
.task-space { flex: 1; }
.tray { display: flex; align-items: center; gap: 13px; margin-right: 17px; }
.clock { display: flex; flex-direction: column; align-items: center; line-height: 17px; margin-right: 12px; }
.desk { width: 14px; height: 38px; border: 1px solid #45566c; background: linear-gradient(#6b7c92, #55657a); }

.toast { position: absolute; right: 5px; bottom: 45px; width: 410px; height: 122px; opacity: .35; background: linear-gradient(165deg, #e8eaec, #cfd1d2 40%, #dcdedf); border: 1px solid #888; color: #333; display: flex; flex-direction: column; overflow: hidden; font-family: "DejaVu Sans Condensed", "Noto Sans", sans-serif; }
.toast-head { display: flex; justify-content: space-between; height: 20px; padding-left: 6px; border-bottom: 1px solid #333; line-height: 19px; }
.toast-x { width: 19px; background: #d8432e; display: flex; align-items: center; justify-content: center; }
.toast-body { display: flex; height: 48px; padding: 5px 50px 0 6px; gap: 6px; }
.toast-title { flex: 1; font-size: 13px; line-height: 16px; }
.toast-level { width: 17px; height: 72px; background: #dfe1e4; border-bottom: 2px solid #222; display: flex; align-items: center; justify-content: center; }
.toast-text { padding: 2px 6px 0; line-height: 13px; height: 33px; }
.toast-foot { display: flex; height: 19px; align-items: center; background: linear-gradient(90deg, #2b80a0, #7fb5c8); white-space: nowrap; border-top: 1px solid #555; }
.toast-foot a { color: #fff; text-decoration: none; }
.toast-foot i { color: #fff; font-style: normal; margin: 0 5px; }
.toast-foot .toast-link { color: #2a20b8; text-decoration: underline; background: #e4e8ee; }
.hp { width: 23px; height: 15px; margin: 0 77px 0 6px; background: #f4f4f4; color: #667; font-style: italic; font-weight: bold; text-align: center; line-height: 14px; flex: none; }
```
